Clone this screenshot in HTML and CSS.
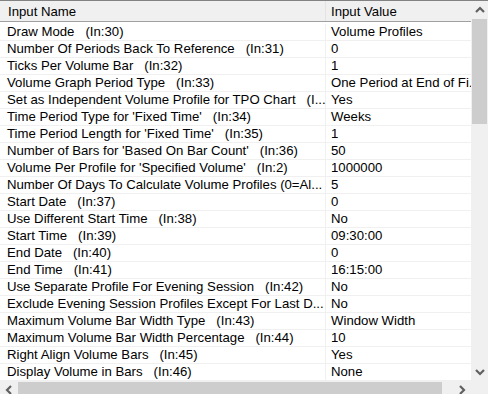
FILE: index.html
```html
<!DOCTYPE html>
<html lang="en">
<head>
    <meta charset="UTF-8">
    <title>Study Inputs</title>
    <link rel="stylesheet" href="styles.css">
</head>
<body>
    <div class="window">
        <div class="list">
            <div class="header">
                <div class="col name">Input Name</div>
                <div class="col value">Input Value</div>
            </div>
            <div class="row"><div class="name">Draw Mode   (In:30)</div><div class="value">Volume Profiles</div></div>
            <div class="row"><div class="name">Number Of Periods Back To Reference   (In:31)</div><div class="value">0</div></div>
            <div class="row"><div class="name">Ticks Per Volume Bar   (In:32)</div><div class="value">1</div></div>
            <div class="row"><div class="name">Volume Graph Period Type   (In:33)</div><div class="value">One Period at End of Fi...</div></div>
            <div class="row"><div class="name">Set as Independent Volume Profile for TPO Chart   (I...</div><div class="value">Yes</div></div>
            <div class="row"><div class="name">Time Period Type for 'Fixed Time'   (In:34)</div><div class="value">Weeks</div></div>
            <div class="row"><div class="name">Time Period Length for 'Fixed Time'   (In:35)</div><div class="value">1</div></div>
            <div class="row"><div class="name">Number of Bars for 'Based On Bar Count'   (In:36)</div><div class="value">50</div></div>
            <div class="row"><div class="name">Volume Per Profile for 'Specified Volume'   (In:2)</div><div class="value">1000000</div></div>
            <div class="row"><div class="name">Number Of Days To Calculate Volume Profiles (0=Al...</div><div class="value">5</div></div>
            <div class="row"><div class="name">Start Date   (In:37)</div><div class="value">0</div></div>
            <div class="row"><div class="name">Use Different Start Time   (In:38)</div><div class="value">No</div></div>
            <div class="row"><div class="name">Start Time   (In:39)</div><div class="value">09:30:00</div></div>
            <div class="row"><div class="name">End Date   (In:40)</div><div class="value">0</div></div>
            <div class="row"><div class="name">End Time   (In:41)</div><div class="value">16:15:00</div></div>
            <div class="row"><div class="name">Use Separate Profile For Evening Session   (In:42)</div><div class="value">No</div></div>
            <div class="row"><div class="name">Exclude Evening Session Profiles Except For Last D...</div><div class="value">No</div></div>
            <div class="row"><div class="name">Maximum Volume Bar Width Type   (In:43)</div><div class="value">Window Width</div></div>
            <div class="row"><div class="name">Maximum Volume Bar Width Percentage   (In:44)</div><div class="value">10</div></div>
            <div class="row"><div class="name">Right Align Volume Bars   (In:45)</div><div class="value">Yes</div></div>
            <div class="row"><div class="name">Display Volume in Bars   (In:46)</div><div class="value">None</div></div>
        </div>

        <div class="vscroll">
            <div class="arrow">
                <svg width="10" height="7" viewBox="0 0 10 7"><path d="M1 6 L5 2 L9 6" fill="none" stroke="#606060" stroke-width="2.2"/></svg>
            </div>
            <div class="thumb-v"></div>
            <div class="track"></div>
            <div class="arrow">
                <svg width="10" height="7" viewBox="0 0 10 7"><path d="M1 1 L5 5 L9 1" fill="none" stroke="#606060" stroke-width="2.2"/></svg>
            </div>
        </div>

        <div class="hscroll">
            <div class="arrow">
                <svg width="7" height="10" viewBox="0 0 7 10"><path d="M6 1 L2 5 L6 9" fill="none" stroke="#606060" stroke-width="2.2"/></svg>
            </div>
            <div class="thumb-h"></div>
            <div class="track"></div>
            <div class="arrow">
                <svg width="7" height="10" viewBox="0 0 7 10"><path d="M1 1 L5 5 L1 9" fill="none" stroke="#606060" stroke-width="2.2"/></svg>
            </div>
        </div>

        <div class="corner"></div>
    </div>
</body>
</html>
```
FILE: styles.css
```css
* {
    box-sizing: border-box;
}
body {
    margin: 0;
    background: #fff;
    font-family: "Liberation Sans", Arial, sans-serif;
    font-size: 13.2px;
    color: #000;
}
.window {
    width: 488px;
    height: 394px;
    overflow: hidden;
    border-top: 1px solid #828282;
    display: grid;
    grid-template-columns: 471px 17px;
    grid-template-rows: 380px 17px;
}
.list {
    overflow: hidden;
    background: #fff;
}
.header {
    display: flex;
    height: 21px;
    background: #f0f0f0;
    border-bottom: 1px solid #a0a0a0;
    margin-bottom: 2px;
}
.header .col {
    line-height: 20px;
    padding-top: 1px;
    white-space: nowrap;
}
.header .name {
    width: 326px;
    padding-left: 8px;
    border-right: 1px solid #e3e3e3;
}
.header .value {
    padding-left: 5px;
}
.row {
    display: flex;
    height: 17px;
    border-bottom: 1px solid #f0f0f0;
    line-height: 16px;
}
.row .name,
.row .value {
    white-space: pre;
    overflow: hidden;
}
.row .name {
    width: 326px;
    flex: none;
    padding-left: 7px;
    border-right: 1px solid #f0f0f0;
}
.row .value {
    flex: 1;
    padding-left: 5px;
}
.vscroll {
    display: flex;
    flex-direction: column;
    background: #f0f0f0;
}
.vscroll .arrow {
    height: 17px;
    display: flex;
    align-items: center;
    justify-content: center;
}
.thumb-v {
    height: 105px;
    margin: 1px 1px 0 1px;
    background: #cdcdcd;
}
.track {
    flex: 1;
}
.hscroll {
    display: flex;
    background: #f0f0f0;
}
.hscroll .arrow {
    width: 17px;
    display: flex;
    align-items: center;
    justify-content: center;
}
.thumb-h {
    width: 424px;
    margin: 1px 0 1px 1px;
    background: #cdcdcd;
}
.corner {
    background: #f0f0f0;
}
```
